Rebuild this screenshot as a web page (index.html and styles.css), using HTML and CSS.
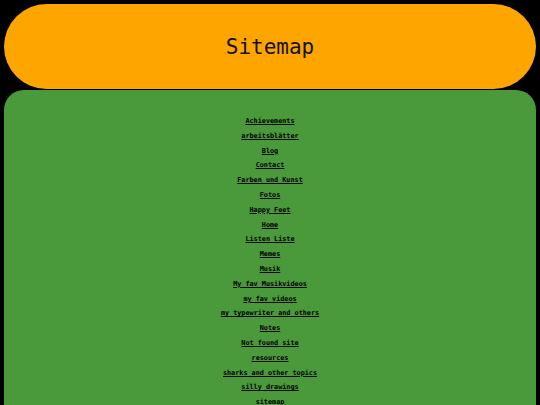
FILE: index.html
```html
<!DOCTYPE html>
<html>
<head>
<meta charset="utf-8">
<link rel="stylesheet" href="styles.css">
<title>Sitemap</title>
</head>
<body>
<header class="banner"><h1 class="title">Sitemap</h1></header>
<main class="panel">
  <ul class="links">
    <li><a href="#">Achievements</a></li>
    <li><a href="#">arbeitsblätter</a></li>
    <li><a href="#">Blog</a></li>
    <li><a href="#">Contact</a></li>
    <li><a href="#">Farben und Kunst</a></li>
    <li><a href="#">Fotos</a></li>
    <li><a href="#">Happy Feet</a></li>
    <li><a href="#">Home</a></li>
    <li><a href="#">Listen Liste</a></li>
    <li><a href="#">Memes</a></li>
    <li><a href="#">Musik</a></li>
    <li><a href="#">My fav Musikvideos</a></li>
    <li><a href="#">my fav videos</a></li>
    <li><a href="#">my typewriter and others</a></li>
    <li><a href="#">Notes</a></li>
    <li><a href="#">Not found site</a></li>
    <li><a href="#">resources</a></li>
    <li><a href="#">sharks and other topics</a></li>
    <li><a href="#">silly drawings</a></li>
    <li><a href="#">sitemap</a></li>
  </ul>
</main>
</body>
</html>
```
FILE: styles.css
```css
html, body {
  background: #000;
}
body {
  margin: 0;
  padding: 4px 4px 0;
  font-family: "DejaVu Sans Mono", monospace;
}
.banner {
  height: 85px;
  background: #ffa500;
  border-radius: 43px;
  display: flex;
  align-items: center;
  justify-content: center;
}
.title {
  margin: 0;
  font-size: 21px;
  font-weight: normal;
  color: #111;
}
.panel {
  margin-top: 1px;
  background: #4a993a;
  border-radius: 20px;
  padding: 24px 0 40px;
}
.links {
  list-style: none;
  margin: 0;
  padding: 0;
  text-align: center;
}
.links li {
  line-height: 14.8px;
  font-size: 6.8px;
  font-weight: bold;
}
.links a {
  color: #000;
  text-decoration: underline;
}
```
